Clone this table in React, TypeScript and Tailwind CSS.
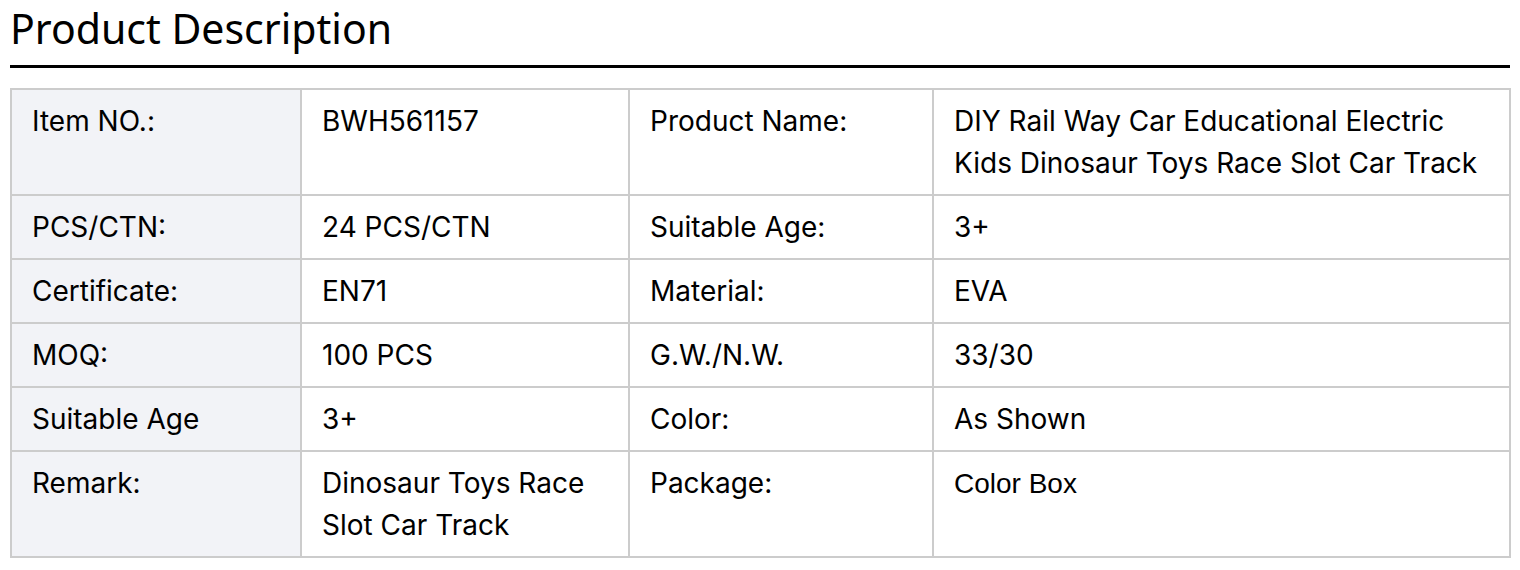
const rows: [string, string, string, string][] = [
  ["Item NO.:", "BWH561157", "Product Name:", "DIY Rail Way Car Educational Electric Kids Dinosaur Toys Race Slot Car Track"],
  ["PCS/CTN:", "24 PCS/CTN", "Suitable Age:", "3+"],
  ["Certificate:", "EN71", "Material:", "EVA"],
  ["MOQ:", "100 PCS", "G.W./N.W.", "33/30"],
  ["Suitable Age", "3+", "Color:", "As Shown"],
  ["Remark:", "Dinosaur Toys Race Slot Car Track", "Package:", "Color Box"],
];

const cell = "border-2 border-[#cccccc] px-5 py-[10px] align-top";

const App = () => {
  return (
    <div className="w-[1520px] h-[570px] bg-white px-[10px] text-black">
      <h2 className="font-['Noto_Sans',sans-serif] text-[41px] leading-[56px] pb-[9px] border-b-[3px] border-black">
        Product Description
      </h2>

      <table className="mt-5 w-[1499px] table-fixed border-collapse font-['Inter',sans-serif] text-[28px] leading-[42px]">
        <colgroup>
          <col className="w-[290px]" />
          <col className="w-[328px]" />
          <col className="w-[304px]" />
          <col className="w-[577px]" />
        </colgroup>
        <tbody>
          {rows.map((row, i) => (
            <tr key={i}>
              <td className={`${cell} bg-[#f2f3f7]`}>{row[0]}</td>
              <td className={cell}>{row[1]}</td>
              <td className={cell}>{row[2]}</td>
              <td className={cell}>
                {row[3] === "Color Box" ? (
                  <span className="font-['Liberation_Sans',sans-serif]">{row[3]}</span>
                ) : (
                  row[3]
                )}
              </td>
            </tr>
          ))}
        </tbody>
      </table>
    </div>
  );
};

export default App;
